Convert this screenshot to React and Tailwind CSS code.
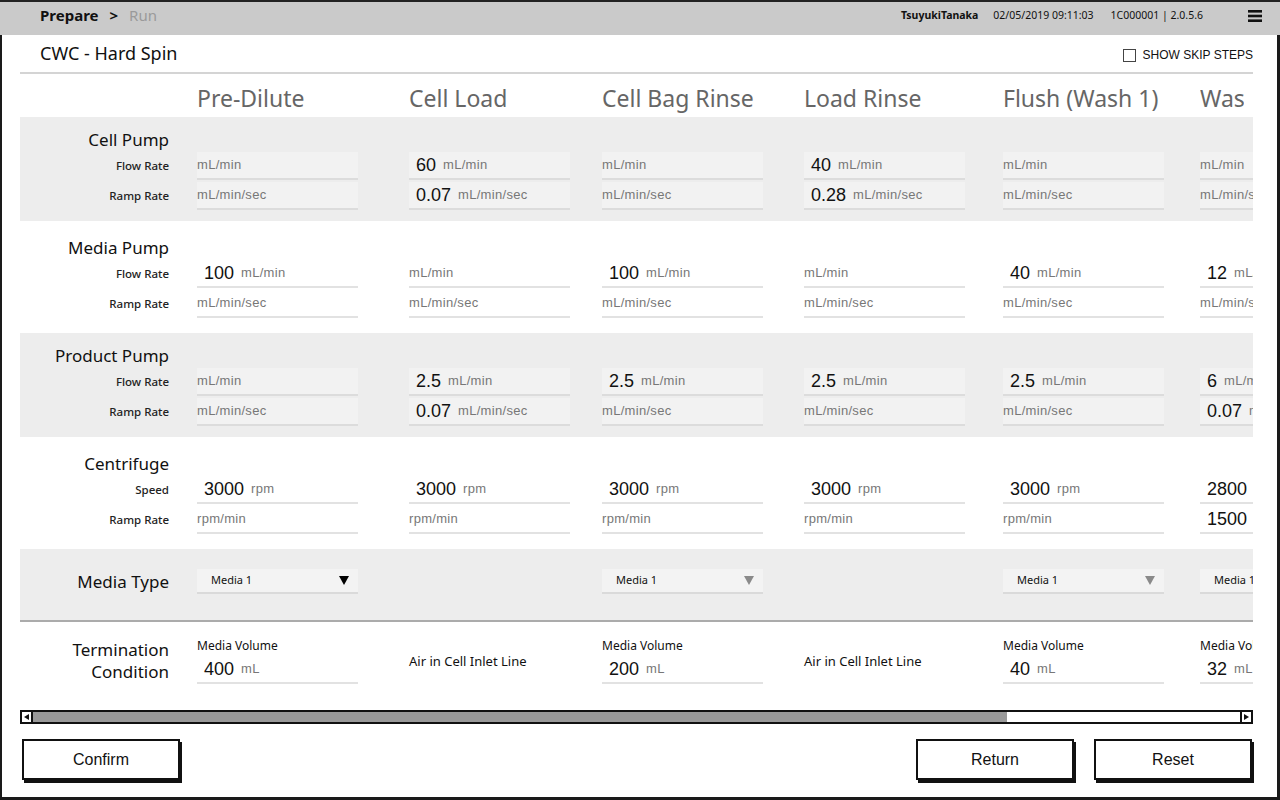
const SANS = "font-['Noto_Sans',sans-serif]";
const ARIAL = "font-['Liberation_Sans',Arial,sans-serif]";

const COL_W = ["w-[212px]", "w-[193px]", "w-[202px]", "w-[199px]", "w-[197px]", "w-[161px]"];
const HEADERS = ["Pre-Dilute", "Cell Load", "Cell Bag Rinse", "Load Rinse", "Flush (Wash 1)", "Wash 2"];

const pumps = [
  {
    title: "Cell Pump",
    tone: "gray",
    rows: [
      { label: "Flow Rate", unit: "mL/min", values: ["", "60", "", "40", "", ""] },
      { label: "Ramp Rate", unit: "mL/min/sec", values: ["", "0.07", "", "0.28", "", ""] },
    ],
  },
  {
    title: "Media Pump",
    tone: "white",
    rows: [
      { label: "Flow Rate", unit: "mL/min", values: ["100", "", "100", "", "40", "12"] },
      { label: "Ramp Rate", unit: "mL/min/sec", values: ["", "", "", "", "", ""] },
    ],
  },
  {
    title: "Product Pump",
    tone: "gray",
    rows: [
      { label: "Flow Rate", unit: "mL/min", values: ["", "2.5", "2.5", "2.5", "2.5", "6"] },
      { label: "Ramp Rate", unit: "mL/min/sec", values: ["", "0.07", "", "", "", "0.07"] },
    ],
  },
  {
    title: "Centrifuge",
    tone: "white",
    rows: [
      { label: "Speed", unit: "rpm", values: ["3000", "3000", "3000", "3000", "3000", "2800"] },
      { label: "Ramp Rate", unit: "rpm/min", values: ["", "", "", "", "", "1500"] },
    ],
  },
];

const mediaTypes = ["dark", null, "light", null, "light", "light"];
const termination = [
  { vol: "400" },
  { air: true },
  { vol: "200" },
  { air: true },
  { vol: "40" },
  { vol: "32" },
];

function Field({ value, unit, tone }) {
  const look =
    tone === "gray"
      ? "bg-[#f2f2f2] border-[#dcdcdc]"
      : "bg-white border-[#e2e2e2]";
  return (
    <div className={`w-[161px] h-[28px] flex items-center border-b-2 whitespace-nowrap ${look}`}>
      {value ? (
        <span className={`pl-[7px] mr-[7px] text-[18px] text-[#111] ${ARIAL}`}>{value}</span>
      ) : null}
      <span className={`text-[13px] text-[#777] tracking-[0.3px] ${ARIAL}`}>{unit}</span>
    </div>
  );
}

function Cols({ children }) {
  return (
    <div className="flex ml-[28px]">
      {children.map((c, i) => (
        <div key={i} className={`${COL_W[i]} shrink-0`}>
          {c}
        </div>
      ))}
    </div>
  );
}

function Band({ pump }) {
  const gray = pump.tone === "gray";
  return (
    <div className={gray ? "bg-[#ededed] h-[104px] pt-[11px]" : "bg-white h-[112px] pt-[15px]"}>
      <div className={`w-[149px] h-[24px] leading-[24px] text-right text-[17px] text-[#111] ${SANS}`}>
        {pump.title}
      </div>
      {pump.rows.map((r, ri) => (
        <div key={r.label} className={`flex items-center h-[28px] ${ri === 1 ? "mt-[2px]" : ""}`}>
          <div className={`w-[149px] shrink-0 text-right text-[11.5px] font-medium text-[#222] ${SANS}`}>
            {r.label}
          </div>
          <Cols>
            {r.values.map((v, i) => (
              <Field key={i} value={v} unit={r.unit} tone={pump.tone} />
            ))}
          </Cols>
        </div>
      ))}
    </div>
  );
}

function Select({ tone }) {
  return (
    <div className="w-[161px] h-[25px] bg-[#f3f3f3] border-b-2 border-[#dadada] flex items-center justify-between pl-[14px] pr-[9px] whitespace-nowrap">
      <span className={`text-[11px] text-[#111] ${SANS}`}>Media 1</span>
      <svg width="10" height="9" viewBox="0 0 10 9">
        <path d="M0 0 H10 L5 9 Z" fill={tone === "dark" ? "#000" : "#8a8a8a"} />
      </svg>
    </div>
  );
}

function Hamburger() {
  return (
    <svg width="14" height="12" viewBox="0 0 14 12">
      <rect x="0" y="0" width="14" height="2.6" fill="#111" />
      <rect x="0" y="4.7" width="14" height="2.6" fill="#111" />
      <rect x="0" y="9.4" width="14" height="2.6" fill="#111" />
    </svg>
  );
}

function Button({ children }) {
  return (
    <button
      className={`w-[158px] h-[41px] bg-white border-2 border-[#111] shadow-[2px_3px_0_#111] text-[16px] text-[#111] ${ARIAL}`}
    >
      {children}
    </button>
  );
}

export default function App() {
  return (
    <div className="w-[1280px] h-[800px] bg-white overflow-hidden">
      <div className="h-[35px] bg-[#cacaca] border-t-2 border-[#222] flex items-center justify-between pl-[40px] pr-[18px] pb-[6px]">
        <div className={`flex items-center text-[15px] ${SANS}`}>
          <span className="font-bold text-[#111]">Prepare</span>
          <span className="font-bold text-[#111] ml-[11px]">&gt;</span>
          <span className="text-[#9a9a9a] ml-[11px]">Run</span>
        </div>
        <div className={`flex items-center text-[#111] ${SANS}`}>
          <span className="text-[10.5px] font-bold">TsuyukiTanaka</span>
          <span className="text-[10.5px] ml-[15px]">02/05/2019 09:11:03</span>
          <span className="text-[10.5px] ml-[17px]">1C000001 | 2.0.5.6</span>
          <span className="ml-[45px] flex">
            <Hamburger />
          </span>
        </div>
      </div>

      <div className="h-[765px] border-l-2 border-r-[3px] border-b-[3px] border-[#1a1a1a]">
        <div className="ml-[18px] w-[1233px]">
          <div className="h-[37px] flex items-center justify-between pl-[20px] border-b-2 border-[#d4d4d4] box-content">
            <span className={`text-[18px] text-[#111] ${SANS}`}>CWC - Hard Spin</span>
            <label className={`flex items-center mt-[3px] text-[12px] text-[#111] ${ARIAL}`}>
              <span className="w-[13px] h-[13px] border-[1.5px] border-[#444] bg-white mr-[7px]"></span>
              SHOW SKIP STEPS
            </label>
          </div>

          <div className="overflow-hidden w-[1233px]">
            <div className="h-[43px] pt-[9px] flex">
              <div className="w-[149px] shrink-0"></div>
              <Cols>
                {HEADERS.map((h, i) => (
                  <div
                    key={h}
                    className={`text-[23px] leading-[30px] text-[#666] whitespace-nowrap ${SANS} ${i === 5 ? "w-[44px] overflow-hidden" : ""}`}
                  >
                    {h}
                  </div>
                ))}
              </Cols>
            </div>

            {pumps.map((p) => (
              <Band key={p.title} pump={p} />
            ))}

            <div className="h-[73px] bg-[#ededed] border-b-2 border-[#ababab] pt-[20px]">
              <div className="flex items-center h-[25px]">
                <div className={`w-[149px] shrink-0 text-right text-[17px] text-[#111] ${SANS}`}>
                  Media Type
                </div>
                <Cols>
                  {mediaTypes.map((m, i) => (m ? <Select key={i} tone={m} /> : <div key={i}></div>))}
                </Cols>
              </div>
            </div>

            <div className="h-[79px] pt-[17px] flex">
              <div className={`w-[149px] shrink-0 text-right text-[17px] leading-[22px] text-[#111] ${SANS}`}>
                Termination
                <br />
                Condition
              </div>
              <Cols>
                {termination.map((t, i) =>
                  t.air ? (
                    <div key={i} className={`pt-[14px] text-[13px] leading-[16px] text-[#111] whitespace-nowrap ${SANS}`}>
                      Air in Cell Inlet Line
                    </div>
                  ) : (
                    <div key={i}>
                      <div className={`text-[12px] leading-[14px] text-[#111] whitespace-nowrap ${SANS}`}>
                        Media Volume
                      </div>
                      <div className="mt-[3px]">
                        <Field value={t.vol} unit="mL" tone="white" />
                      </div>
                    </div>
                  )
                )}
              </Cols>
            </div>
          </div>

          <div className="mt-[9px] h-[14px] border-2 border-[#111] flex">
            <div className="w-[11px] h-full bg-white border-r-2 border-[#111] flex items-center justify-center">
              <svg width="5" height="6" viewBox="0 0 5 6">
                <path d="M5 0 V6 L0 3 Z" fill="#111" />
              </svg>
            </div>
            <div className="w-[974px] h-full bg-[#999]"></div>
            <div className="flex-1 h-full bg-white"></div>
            <div className="w-[11px] h-full bg-white border-l-2 border-[#111] flex items-center justify-center">
              <svg width="5" height="6" viewBox="0 0 5 6">
                <path d="M0 0 V6 L5 3 Z" fill="#111" />
              </svg>
            </div>
          </div>

          <div className="mt-[15px] flex items-start justify-between pl-[2px] pr-[1px]">
            <Button>Confirm</Button>
            <div className="flex gap-[20px]">
              <Button>Return</Button>
              <Button>Reset</Button>
            </div>
          </div>
        </div>
      </div>
    </div>
  );
}
